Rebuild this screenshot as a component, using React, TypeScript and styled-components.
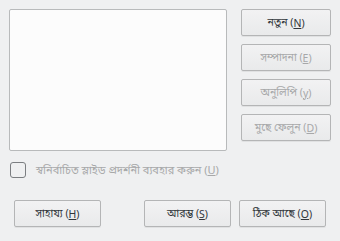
import React from "react";
import styled, { createGlobalStyle } from "styled-components";

const Global = createGlobalStyle`
  html, body { margin: 0; padding: 0; background: #eff0f1; }
  body { font-family: "Noto Sans", "Noto Sans Bengali", "Lohit Bengali", sans-serif; font-size: 11px; }
`;

const Dialog = styled.div`
  width: 340px;
  height: 241px;
  box-sizing: border-box;
  padding: 9px 9px 0 9px;
  display: flex;
  flex-direction: column;
`;

const TopRow = styled.div`
  display: flex;
  gap: 14px;
`;

const ListBox = styled.div`
  flex: 1;
  height: 142px;
  box-sizing: border-box;
  background: #fcfcfc;
  border: 1px solid #b8babb;
  border-radius: 2px;
`;

const SideColumn = styled.div`
  width: 90px;
  display: flex;
  flex-direction: column;
  gap: 8px;
`;

const Button = styled.button<{ $w?: number; $disabled?: boolean }>`
  width: ${(p) => (p.$w ? `${p.$w}px` : "100%")};
  height: 27px;
  box-sizing: border-box;
  border: 1px solid #b4b5b6;
  border-radius: 2px;
  background: linear-gradient(#f2f2f3, #e9eaeb);
  box-shadow: 0 1px 0 rgba(0, 0, 0, 0.06);
  color: ${(p) => (p.$disabled ? "#a7a8a9" : "#31363b")};
  font-family: inherit;
  font-size: 10.5px;
  padding: 0;
  display: flex;
  align-items: center;
  justify-content: center;
  white-space: nowrap;
`;

const U = styled.span`
  text-decoration: underline;
`;

const CheckRow = styled.div`
  display: flex;
  align-items: center;
  gap: 10px;
  margin-top: 11px;
  padding-left: 1px;
  height: 16px;
`;

const CheckBox = styled.div`
  width: 16px;
  height: 16px;
  box-sizing: border-box;
  border: 1px solid #7b7e81;
  border-radius: 3px;
  background: #eff0f1;
`;

const CheckLabel = styled.span`
  color: #a7a8a9;
  font-size: 11px;
  white-space: nowrap;
`;

const BottomRow = styled.div`
  display: flex;
  align-items: center;
  margin-top: 22px;
  padding: 0 5px;
  gap: 8px;
`;

const Spacer = styled.div`
  flex: 1;
`;

export default function App() {
  return (
    <>
      <Global />
      <Dialog>
        <TopRow>
          <ListBox />
          <SideColumn>
            <Button>
              নতুন (<U>N</U>)
            </Button>
            <Button $disabled>
              সম্পাদনা (<U>E</U>)
            </Button>
            <Button $disabled>
              অনুলিপি (<U>y</U>)
            </Button>
            <Button $disabled>
              মুছে ফেলুন (<U>D</U>)
            </Button>
          </SideColumn>
        </TopRow>
        <CheckRow>
          <CheckBox />
          <CheckLabel>
            স্বনির্বাচিত স্লাইড প্রদর্শনী ব্যবহার করুন (<U>U</U>)
          </CheckLabel>
        </CheckRow>
        <BottomRow>
          <Button $w={87}>
            সাহায্য (<U>H</U>)
          </Button>
          <Spacer />
          <Button $w={87}>
            আরম্ভ (<U>S</U>)
          </Button>
          <Button $w={87}>
            ঠিক আছে (<U>O</U>)
          </Button>
        </BottomRow>
      </Dialog>
    </>
  );
}
